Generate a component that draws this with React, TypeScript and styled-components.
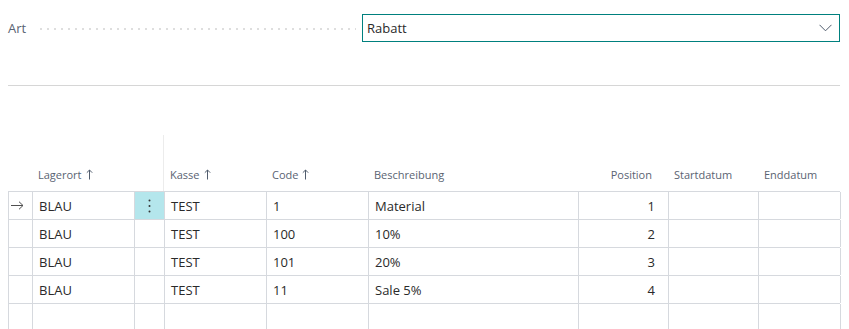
import React from "react";
import styled, { createGlobalStyle } from "styled-components";

const GlobalStyle = createGlobalStyle`
  body {
    margin: 0;
    background: #fff;
    font-family: "Segoe UI", "Open Sans", "Noto Sans", sans-serif;
    overflow: hidden;
  }
`;

const columns = "24px 102px 30px 102px 102px 210px 90px 90px 82px";

const rows = [
  { lagerort: "BLAU", kasse: "TEST", code: "1", beschreibung: "Material", position: "1", current: true },
  { lagerort: "BLAU", kasse: "TEST", code: "100", beschreibung: "10%", position: "2" },
  { lagerort: "BLAU", kasse: "TEST", code: "101", beschreibung: "20%", position: "3" },
  { lagerort: "BLAU", kasse: "TEST", code: "11", beschreibung: "Sale 5%", position: "4" },
];

const SortUp = () => (
  <SortIcon width="7" height="11" viewBox="0 0 7 11">
    <path d="M3.5 10.5 V1 M0.8 3.7 L3.5 1 L6.2 3.7" fill="none" stroke="#505c6d" strokeWidth="1" />
  </SortIcon>
);

export default function App() {
  return (
    <Page>
      <GlobalStyle />
      <FieldRow>
        <FieldLabel>Art</FieldLabel>
        <Dots />
        <Select>
          <SelectValue>Rabatt</SelectValue>
          <svg width="13" height="8" viewBox="0 0 13 8">
            <path d="M0.5 0.8 L6.5 6.8 L12.5 0.8" fill="none" stroke="#505c6d" strokeWidth="1" />
          </svg>
        </Select>
      </FieldRow>
      <Separator />
      <Table>
        <HeaderRow>
          <HeaderCell />
          <HeaderCell>
            Lagerort <SortUp />
          </HeaderCell>
          <HeaderCell />
          <HeaderCell $frozen>
            Kasse <SortUp />
          </HeaderCell>
          <HeaderCell>
            Code <SortUp />
          </HeaderCell>
          <HeaderCell>Beschreibung</HeaderCell>
          <HeaderCell $right>Position</HeaderCell>
          <HeaderCell>Startdatum</HeaderCell>
          <HeaderCell>Enddatum</HeaderCell>
        </HeaderRow>
        {rows.map((r, i) => (
          <Row key={i}>
            <Cell $center>
              {r.current ? (
                <svg width="13" height="9" viewBox="0 0 13 9">
                  <path d="M0 4.5 H12 M8 0.7 L12 4.5 L8 8.3" fill="none" stroke="#505050" strokeWidth="1" />
                </svg>
              ) : null}
            </Cell>
            <Cell>{r.lagerort}</Cell>
            <ActionCell $active={!!r.current}>
              {r.current ? (
                <svg width="3" height="14" viewBox="0 0 3 14">
                  <circle cx="1.5" cy="1.5" r="1" fill="#333" />
                  <circle cx="1.5" cy="7" r="1" fill="#333" />
                  <circle cx="1.5" cy="12.5" r="1" fill="#333" />
                </svg>
              ) : null}
            </ActionCell>
            <Cell>{r.kasse}</Cell>
            <Cell>{r.code}</Cell>
            <Cell>{r.beschreibung}</Cell>
            <Cell $right>{r.position}</Cell>
            <Cell />
            <Cell />
          </Row>
        ))}
        <Row>
          {Array.from({ length: 9 }).map((_, i) => (
            <Cell key={i} />
          ))}
        </Row>
      </Table>
    </Page>
  );
}

const Page = styled.div`
  padding: 14px 9px 0 8px;
  width: 832px;
`;

const FieldRow = styled.div`
  display: flex;
  align-items: center;
  height: 28px;
`;

const FieldLabel = styled.span`
  font-size: 13px;
  color: #5a6372;
  width: 32px;
`;

const Dots = styled.div`
  flex: 0 0 316px;
  height: 2px;
  margin-top: 2px;
  background-image: linear-gradient(to right, #dedede 2px, transparent 2px);
  background-size: 7px 2px;
  background-repeat: repeat-x;
`;

const Select = styled.div`
  flex: 1;
  margin-left: 6px;
  height: 28px;
  box-sizing: border-box;
  border: 1px solid #00807e;
  display: flex;
  align-items: center;
  justify-content: space-between;
  padding: 0 7px 0 4px;
`;

const SelectValue = styled.span`
  font-size: 13px;
  color: #2a2a2a;
`;

const Separator = styled.div`
  margin-top: 43px;
  height: 1px;
  background: #d6d6d6;
`;

const Table = styled.div`
  margin-top: 49px;
`;

const HeaderRow = styled.div`
  display: grid;
  grid-template-columns: ${columns};
  height: 56px;
  border-bottom: 1px solid #d6d9de;
`;

const HeaderCell = styled.div<{ $right?: boolean; $frozen?: boolean }>`
  display: flex;
  align-items: flex-end;
  gap: 4px;
  justify-content: ${(p) => (p.$right ? "flex-end" : "flex-start")};
  padding: 0 ${(p) => (p.$right ? "16px" : "6px")} 8px 6px;
  font-size: 11px;
  line-height: 16px;
  color: #5a6372;
  white-space: nowrap;
  border-left: ${(p) => (p.$frozen ? "1px solid #ececec" : "none")};
  margin-left: ${(p) => (p.$frozen ? "-1px" : "0")};
`;

const SortIcon = styled.svg`
  margin-bottom: 3px;
`;

const Row = styled.div`
  display: grid;
  grid-template-columns: ${columns};
  height: 28px;
  box-sizing: border-box;
  border-bottom: 1px solid #d6d9de;
  border-left: 1px solid #d6d9de;
`;

const Cell = styled.div<{ $right?: boolean; $center?: boolean }>`
  display: flex;
  align-items: center;
  justify-content: ${(p) => (p.$right ? "flex-end" : p.$center ? "center" : "flex-start")};
  padding: 0 ${(p) => (p.$right ? "13px" : "6px")} 0 ${(p) => (p.$center ? "0" : "6px")};
  font-size: 13px;
  color: #2a2a2a;
  border-right: 1px solid #d6d9de;
  white-space: nowrap;
  overflow: hidden;
`;

const ActionCell = styled(Cell)<{ $active: boolean }>`
  justify-content: center;
  padding: 0;
  background: ${(p) => (p.$active ? "#b4e6ec" : "transparent")};
`;
